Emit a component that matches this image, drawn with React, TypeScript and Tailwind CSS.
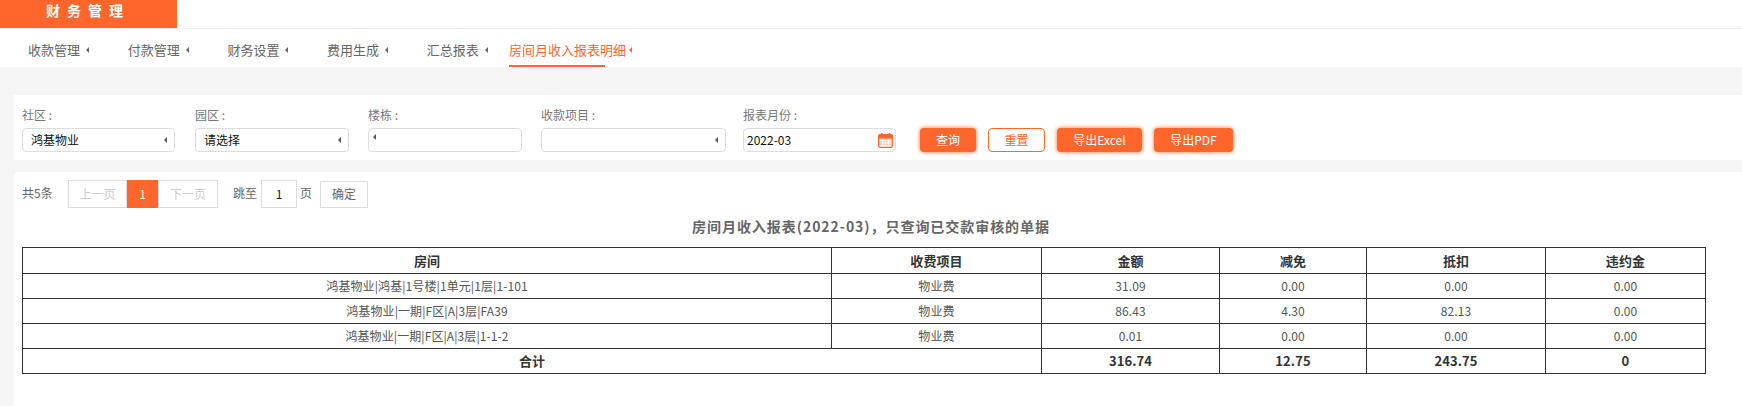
const font = 'font-["Microsoft_YaHei","Noto_Sans_CJK_SC",sans-serif]';

const tabs = ['收款管理', '付款管理', '财务设置', '费用生成', '汇总报表'];

const rows = [
  ['鸿基物业|鸿基|1号楼|1单元|1层|1-101', '物业费', '31.09', '0.00', '0.00', '0.00'],
  ['鸿基物业|一期|F区|A|3层|FA39', '物业费', '86.43', '4.30', '82.13', '0.00'],
  ['鸿基物业|一期|F区|A|3层|1-1-2', '物业费', '0.01', '0.00', '0.00', '0.00'],
];

function Caret({ className }: { className?: string }) {
  return <span className={`inline-block h-0 w-0 border-y-[3px] border-r-[3px] border-y-transparent border-r-current ${className ?? ''}`} />;
}

function CalendarIcon() {
  return (
    <svg width="15" height="15" viewBox="0 0 15 15" className="mt-[1px]">
      <rect x="0.5" y="1.5" width="14" height="13" rx="1.5" fill="#ffc9b3" stroke="#ff662b" />
      <rect x="0" y="1.5" width="15" height="4" rx="1" fill="#ff662b" />
      <rect x="3" y="0" width="1.5" height="3" fill="#ff662b" />
      <rect x="10.5" y="0" width="1.5" height="3" fill="#ff662b" />
      <path d="M2 7.5h11M2 10h11M2 12.5h11M4.5 6.5v7M7.5 6.5v7M10.5 6.5v7" stroke="#fff" strokeWidth="1" />
    </svg>
  );
}

function Field({ label, width, value, caretLeft }: { label: string; width: string; value?: string; caretLeft?: boolean }) {
  return (
    <div className={width}>
      <div className="mb-[3px] h-[20px] text-[12px] leading-[20px] text-[#777]">{label}</div>
      <div className="flex h-[24px] items-center justify-between rounded-[4px] border border-[#ddd] pl-[8px] pr-[7px] text-[12px] text-[#111]">
        {caretLeft ? <Caret className="-mt-[6px] -ml-[4px] text-[#555]" /> : <span>{value}</span>}
        {!caretLeft && <Caret className="text-[#555]" />}
      </div>
    </div>
  );
}

export default function App() {
  return (
    <div className={`${font} h-[406px] w-[1742px] overflow-hidden bg-white`}>
      <div className="h-[29px] border-b border-[#eee]">
        <div className="flex h-[28px] w-[177px] items-center bg-[#ff662b] pb-[8px] pl-[46px] text-[14px] font-bold tracking-[7px] text-white">
          财务管理
        </div>
      </div>

      <div className="flex h-[38px] pl-[28px] text-[13px] text-[#666]">
        {tabs.map((t) => (
          <div key={t} className="flex w-[99.7px] items-center gap-[6px] pt-[4px]">
            {t}
            <Caret className="text-[#666]" />
          </div>
        ))}
        <div className="relative -ml-[17.5px] flex items-center gap-[3px] pt-[4px] whitespace-nowrap text-[#ff662b]">
          房间月收入报表明细
          <Caret />
          <span className="absolute bottom-0 left-0 h-[2px] w-[96px] bg-[#ff662b]" />
        </div>
      </div>

      <div className="h-[339px] bg-[#f5f5f5] pl-[14px] pt-[28px]">
        <div className="flex h-[65px] bg-white pl-[8px] pt-[10px]">
          <div className="flex gap-[20px]">
            <Field label="社区 :" width="w-[153px]" value="鸿基物业" />
            <Field label="园区 :" width="w-[154px]" value="请选择" />
            <Field label="楼栋 :" width="w-[154px] -ml-[1px]" caretLeft />
            <Field label="收款项目 :" width="w-[185px] -ml-[1px]" />
            <div className="-ml-[3px] w-[153px]">
              <div className="mb-[3px] h-[20px] text-[12px] leading-[20px] text-[#777]">报表月份 :</div>
              <div className="flex h-[24px] items-center justify-between rounded-[4px] border border-[#ddd] pl-[3px] pr-[2px] text-[12px] text-[#111]">
                2022-03
                <CalendarIcon />
              </div>
            </div>
          </div>
          <div className="ml-[24px] mt-[23px] flex h-[24px] gap-[12px] text-[12px] text-white">
            <button className="w-[56px] rounded-[4px] bg-[#ff662b] shadow-[0_0_4px_#ff662b]">查询</button>
            <button className="w-[57px] rounded-[4px] border border-[#ff662b] text-[#ff662b]">重置</button>
            <button className="w-[85px] rounded-[4px] bg-[#ff662b] shadow-[0_0_4px_#ff662b]">导出Excel</button>
            <button className="w-[79px] rounded-[4px] bg-[#ff662b] shadow-[0_0_4px_#ff662b]">导出PDF</button>
          </div>
        </div>

        <div className="mt-[12px] h-[234px] rounded-tl-[4px] bg-white pl-[8px] pt-[8px]">
          <div className="flex items-center text-[12px] text-[#666]">
            <span className="w-[46px] pb-[2px]">共5条</span>
            <span className="flex h-[28px] w-[59px] items-center justify-center border border-[#ddd] text-[#ccc]">上一页</span>
            <span className="flex h-[28px] w-[31px] items-center justify-center bg-[#ff662b] text-white">1</span>
            <span className="flex h-[28px] w-[60px] items-center justify-center border border-[#ddd] text-[#ccc]">下一页</span>
            <span className="ml-[15px] w-[28px] pb-[2px]">跳至</span>
            <span className="flex h-[28px] w-[36px] items-center justify-center border border-[#ddd] text-[#222]">1</span>
            <span className="ml-[3px] w-[20px] pb-[2px]">页</span>
            <span className="flex h-[27px] w-[48px] items-center justify-center border border-[#ddd]">确定</span>
          </div>

          <h2 className="mt-[7px] h-[22px] w-[1698px] text-center text-[14px] font-bold leading-[22px] tracking-[0.95px] text-[#666]">
            房间月收入报表(2022-03)，只查询已交款审核的单据
          </h2>

          <table className="mt-[10px] w-[1683px] table-fixed border-collapse text-center text-[12px] tracking-[0.1px] text-[#555]">
            <colgroup>
              <col className="w-[809px]" />
              <col className="w-[210px]" />
              <col className="w-[178px]" />
              <col className="w-[147px]" />
              <col className="w-[179px]" />
              <col className="w-[160px]" />
            </colgroup>
            <thead>
              <tr className="h-[26px] text-[13px] text-[#333]">
                {['房间', '收费项目', '金额', '减免', '抵扣', '违约金'].map((h) => (
                  <th key={h} className="border border-[#333] p-0 font-bold">{h}</th>
                ))}
              </tr>
            </thead>
            <tbody>
              {rows.map((r) => (
                <tr key={r[0]} className="h-[25px]">
                  {r.map((c, i) => (
                    <td key={i} className="border border-[#333] p-0">{c}</td>
                  ))}
                </tr>
              ))}
              <tr className="h-[25px] text-[13px] font-bold text-[#333]">
                <td colSpan={2} className="border border-[#333] p-0">合计</td>
                <td className="border border-[#333] p-0">316.74</td>
                <td className="border border-[#333] p-0">12.75</td>
                <td className="border border-[#333] p-0">243.75</td>
                <td className="border border-[#333] p-0">0</td>
              </tr>
            </tbody>
          </table>
        </div>
      </div>
    </div>
  );
}
